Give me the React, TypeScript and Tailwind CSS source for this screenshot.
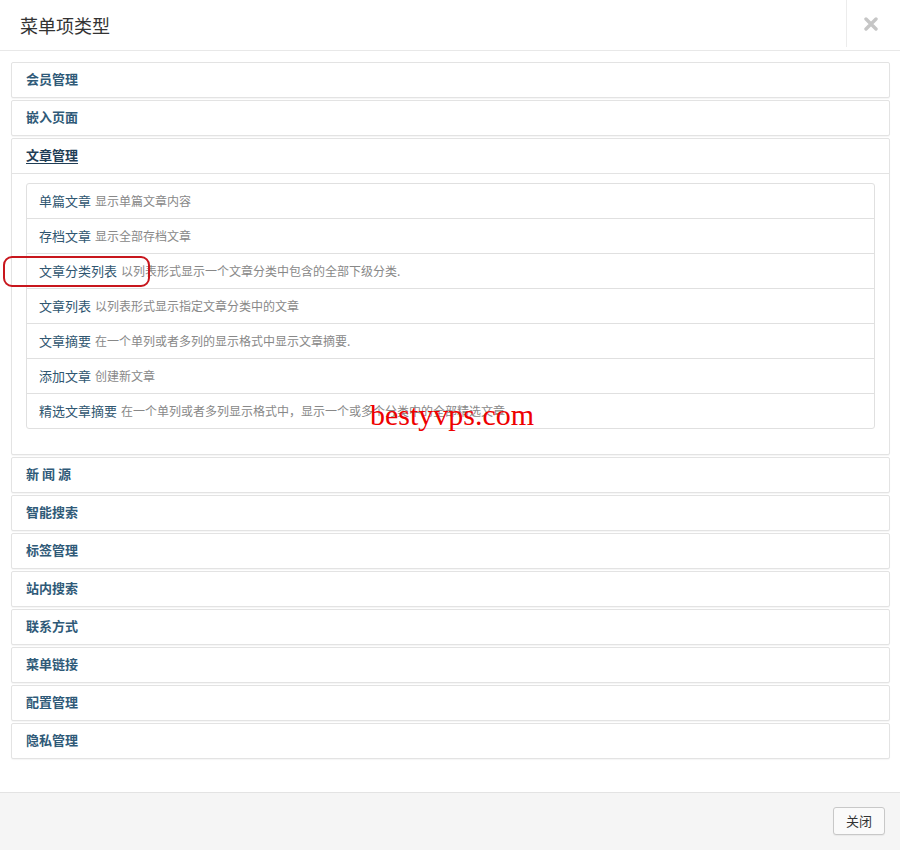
import React from "react";

const FONT = { fontFamily: '"Noto Sans CJK SC", "Noto Sans", "Liberation Sans", sans-serif' };

const before = ["会员管理", "嵌入页面"];
const after = ["新 闻 源", "智能搜索", "标签管理", "站内搜索", "联系方式", "菜单链接", "配置管理", "隐私管理"];

const items: [string, string][] = [
  ["单篇文章", "显示单篇文章内容"],
  ["存档文章", "显示全部存档文章"],
  ["文章分类列表", "以列表形式显示一个文章分类中包含的全部下级分类."],
  ["文章列表", "以列表形式显示指定文章分类中的文章"],
  ["文章摘要", "在一个单列或者多列的显示格式中显示文章摘要."],
  ["添加文章", "创建新文章"],
  ["精选文章摘要", "在一个单列或者多列显示格式中，显示一个或多个分类中的全部精选文章"],
];

function Panel({ title }: { title: string }) {
  return (
    <div className="border border-[#e3e3e3] bg-white shadow-[0_1px_1px_rgba(0,0,0,0.04)] rounded-[2px]">
      <div className="h-[34px] flex items-center pl-[14px] pb-[2px] text-[13px] font-bold text-[#2f5a78]">{title}</div>
    </div>
  );
}

export default function App() {
  return (
    <div className="relative w-[900px] h-[850px] bg-white flex flex-col overflow-hidden" style={FONT}>
      <div className="h-[51px] shrink-0 border-b border-[#e8e8e8] flex items-stretch">
        <div className="flex-1 flex items-center pl-[20px] text-[18px] text-[#333]">菜单项类型</div>
        <div className="w-[54px] mb-[3px] border-l border-[#ececec] flex items-center pl-[17px]">
          <svg width="14" height="14" viewBox="0 0 14 14">
            <path d="M2 2 L12 12 M12 2 L2 12" stroke="#c6c6c6" strokeWidth="3.4" strokeLinecap="round" />
          </svg>
        </div>
      </div>

      <div className="flex-1 pt-[11px] pl-[11px] pr-[10px] flex flex-col gap-[2px]">
        {before.map((t) => (
          <Panel key={t} title={t} />
        ))}
        <div className="border border-[#e3e3e3] bg-white shadow-[0_1px_1px_rgba(0,0,0,0.04)] rounded-[2px]">
          <div className="h-[35px] flex items-center pl-[14px] pb-[2px] text-[13px] font-bold text-[#1f3d55] border-b border-[#e3e3e3]">
            <span className="underline underline-offset-[3px]">文章管理</span>
          </div>
          <div className="pt-[9px] pb-[25px] pl-[14px] pr-[14px]">
            <div className="border border-[#e0e0e0] rounded-[3px]">
              {items.map(([t, d], i) => (
                <div
                  key={t}
                  className={`flex items-center pl-[12px] whitespace-nowrap ${i > 0 ? "border-t border-[#e0e0e0] h-[35px]" : "h-[34px]"}`}
                >
                  <span className="text-[13px] text-[#2f5670]">{t}</span>
                  <span className="ml-[4px] text-[12px] text-[#888]">{d}</span>
                </div>
              ))}
            </div>
          </div>
        </div>
        {after.map((t) => (
          <Panel key={t} title={t} />
        ))}
      </div>

      <div className="h-[58px] shrink-0 border-t border-[#e3e3e3] bg-[#f5f5f5] flex justify-end items-start pt-[14px] pr-[15px]">
        <button className="w-[52px] h-[28px] border border-[#c8c8c8] rounded-[3px] bg-[#fafafa] text-[13px] text-[#333] flex items-center justify-center shadow-[0_1px_1px_rgba(0,0,0,0.05)]">
          关闭
        </button>
      </div>

      <div className="absolute left-[3px] top-[256px] w-[147px] h-[31px] border-2 border-[#c8161d] rounded-[9px] pointer-events-none" />
      <div
        className="absolute left-[370px] top-[400px] text-[30px] leading-none text-[#ee0000] pointer-events-none"
        style={{ fontFamily: '"Liberation Serif", serif' }}
      >
        bestyvps.com
      </div>
    </div>
  );
}
